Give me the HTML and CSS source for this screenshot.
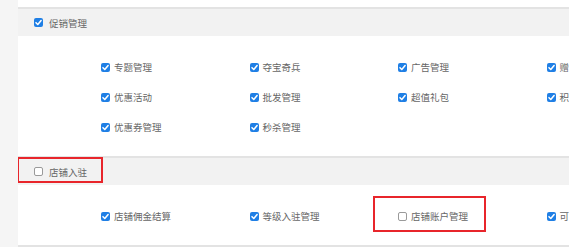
FILE: index.html
```html
<!DOCTYPE html>
<html lang="zh-CN">
<head>
    <meta charset="UTF-8">
    <meta name="viewport" content="width=device-width, initial-scale=1.0">
    <title>权限设置</title>
    <link rel="stylesheet" href="styles.css">
</head>
<body>
    <div class="sidebar"></div>

    <div class="content">
        <!-- 促销管理 -->
        <div class="section">
            <div class="section-head">
                <span class="cb on"><svg viewBox="0 0 10 10"><path d="M2.2 5.2 L4.2 7.2 L7.9 2.9" /></svg></span>
                <span class="head-label">促销管理</span>
            </div>
            <div class="section-body">
                <div class="item"><span class="cb on"><svg viewBox="0 0 10 10"><path d="M2.2 5.2 L4.2 7.2 L7.9 2.9" /></svg></span>专题管理</div>
                <div class="item"><span class="cb on"><svg viewBox="0 0 10 10"><path d="M2.2 5.2 L4.2 7.2 L7.9 2.9" /></svg></span>夺宝奇兵</div>
                <div class="item"><span class="cb on"><svg viewBox="0 0 10 10"><path d="M2.2 5.2 L4.2 7.2 L7.9 2.9" /></svg></span>广告管理</div>
                <div class="item"><span class="cb on"><svg viewBox="0 0 10 10"><path d="M2.2 5.2 L4.2 7.2 L7.9 2.9" /></svg></span>赠品管理</div>
                <div class="item"><span class="cb on"><svg viewBox="0 0 10 10"><path d="M2.2 5.2 L4.2 7.2 L7.9 2.9" /></svg></span>优惠活动</div>
                <div class="item"><span class="cb on"><svg viewBox="0 0 10 10"><path d="M2.2 5.2 L4.2 7.2 L7.9 2.9" /></svg></span>批发管理</div>
                <div class="item"><span class="cb on"><svg viewBox="0 0 10 10"><path d="M2.2 5.2 L4.2 7.2 L7.9 2.9" /></svg></span>超值礼包</div>
                <div class="item"><span class="cb on"><svg viewBox="0 0 10 10"><path d="M2.2 5.2 L4.2 7.2 L7.9 2.9" /></svg></span>积分商城</div>
                <div class="item"><span class="cb on"><svg viewBox="0 0 10 10"><path d="M2.2 5.2 L4.2 7.2 L7.9 2.9" /></svg></span>优惠券管理</div>
                <div class="item"><span class="cb on"><svg viewBox="0 0 10 10"><path d="M2.2 5.2 L4.2 7.2 L7.9 2.9" /></svg></span>秒杀管理</div>
            </div>
        </div>

        <!-- 店铺入驻 -->
        <div class="section">
            <div class="section-head">
                <span class="cb"></span>
                <span class="head-label">店铺入驻</span>
                <div class="mark mark-head"></div>
            </div>
            <div class="section-body">
                <div class="item"><span class="cb on"><svg viewBox="0 0 10 10"><path d="M2.2 5.2 L4.2 7.2 L7.9 2.9" /></svg></span>店铺佣金结算</div>
                <div class="item"><span class="cb on"><svg viewBox="0 0 10 10"><path d="M2.2 5.2 L4.2 7.2 L7.9 2.9" /></svg></span>等级入驻管理</div>
                <div class="item"><span class="cb"></span>店铺账户管理<div class="mark mark-item"></div></div>
                <div class="item"><span class="cb on"><svg viewBox="0 0 10 10"><path d="M2.2 5.2 L4.2 7.2 L7.9 2.9" /></svg></span>可提现管理</div>
            </div>
        </div>
    </div>
</body>
</html>
```

FILE: styles.css
```css
body {
    display: flex;
    margin: 0;
    height: 100vh;
    overflow: hidden;
    font-family: "Noto Sans CJK SC", "Noto Sans", sans-serif;
    font-size: 9.5px;
    color: #666;
    background-color: #fff;
}
.sidebar {
    width: 18px;
    flex-shrink: 0;
    background-color: #f5f5f5;
}
.content {
    flex: 1;
    min-width: 0;
    padding-top: 7px;
    overflow: hidden;
}
.section {
    border-top: 2px solid #e3e3e3;
}
.section:last-child {
    border-bottom: 2px solid #e3e3e3;
}
.section-head {
    position: relative;
    display: flex;
    align-items: center;
    height: 27px;
    padding-left: 16px;
    background-color: #f2f2f2;
}
.head-label {
    margin-left: 6px;
}
.section-body {
    display: grid;
    grid-template-columns: repeat(4, 148.5px);
    grid-auto-rows: 30px;
    padding: 16px 0 14px 83px;
}
.item {
    position: relative;
    display: flex;
    align-items: center;
    white-space: nowrap;
}
.item .cb {
    margin-right: 4px;
}
.cb {
    display: inline-flex;
    align-items: center;
    justify-content: center;
    width: 9px;
    height: 9px;
    box-sizing: border-box;
    border: 1px solid #9a9a9a;
    border-radius: 2px;
    background-color: #fff;
    flex-shrink: 0;
}
.cb.on {
    border: none;
    background-color: #1f7fe5;
}
.cb svg {
    width: 9px;
    height: 9px;
}
.cb path {
    fill: none;
    stroke: #fff;
    stroke-width: 1.7;
    stroke-linecap: round;
    stroke-linejoin: round;
}
.mark {
    position: absolute;
    border: 2px solid #e8252b;
    box-sizing: border-box;
}
.mark-head {
    left: -1px;
    top: -1px;
    width: 86px;
    height: 26px;
}
.mark-item {
    left: -25px;
    top: -5px;
    width: 113px;
    height: 36px;
}
```
